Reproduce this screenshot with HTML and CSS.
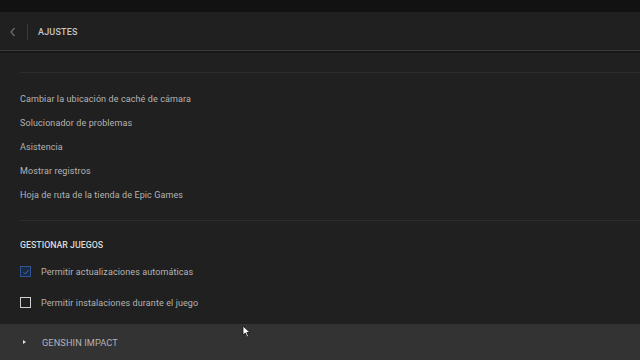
FILE: index.html
```html
<!DOCTYPE html>
<html lang="es">
<head>
    <meta charset="UTF-8">
    <meta name="viewport" content="width=device-width, initial-scale=1.0">
    <title>Ajustes</title>
    <link rel="stylesheet" href="styles.css">
</head>
<body>
    <div class="topbar"></div>

    <header class="header">
        <button class="back" aria-label="Volver">
            <svg width="8" height="10" viewBox="0 0 8 10"><path d="M5.5 1 L2 5 L5.5 9" fill="none" stroke="#6e6e6e" stroke-width="1.2"/></svg>
        </button>
        <span class="divider"></span>
        <h1 class="title">AJUSTES</h1>
    </header>

    <main class="content">
        <hr class="sep">

        <ul class="links">
            <li>Cambiar la ubicación de caché de cámara</li>
            <li>Solucionador de problemas</li>
            <li>Asistencia</li>
            <li>Mostrar registros</li>
            <li>Hoja de ruta de la tienda de Epic Games</li>
        </ul>

        <hr class="sep">

        <h2 class="section-title">GESTIONAR JUEGOS</h2>

        <label class="check-row">
            <span class="box checked">
                <svg width="8" height="8" viewBox="0 0 8 8"><path d="M1.5 4.2 L3.3 6 L6.6 2" fill="none" stroke="#3d6bb3" stroke-width="1"/></svg>
            </span>
            Permitir actualizaciones automáticas
        </label>
        <label class="check-row">
            <span class="box"></span>
            Permitir instalaciones durante el juego
        </label>
    </main>

    <div class="game-bar">
        <span class="caret"></span>
        <span class="game-name">GENSHIN IMPACT</span>
        <svg class="cursor" width="9" height="13" viewBox="0 0 9 13"><path d="M1 1 L1 10 L3.3 8 L5 12 L6.5 11.3 L4.8 7.5 L8 7.5 Z" fill="#fff" stroke="#111" stroke-width="0.8"/></svg>
    </div>
</body>
</html>
```

FILE: styles.css
```css
:root {
    --bg: #202020;
    --bar: #121212;
    --text: #b4b4b4;
    --text-strong: #d8d8d8;
    --line: #2d2d2d;
}

* {
    box-sizing: border-box;
    margin: 0;
    padding: 0;
}

body {
    background: var(--bg);
    color: var(--text);
    font-family: 'Roboto', 'Liberation Sans', sans-serif;
    width: 640px;
    height: 360px;
    overflow: hidden;
    display: flex;
    flex-direction: column;
}

.topbar {
    height: 12px;
    background: var(--bar);
}

.header {
    height: 39px;
    display: flex;
    align-items: center;
    padding: 2px 0 0 9px;
    border-bottom: 1px solid #3a3a3a;
    position: relative;
}

.header::after {
    content: '';
    position: absolute;
    left: 0;
    right: 0;
    bottom: -3px;
    height: 2px;
    background: #181818;
}

.back {
    background: none;
    border: none;
    width: 8px;
    height: 10px;
    display: flex;
}

.divider {
    width: 1px;
    height: 16px;
    background: #3a3a3a;
    margin-left: 10px;
}

.title {
    font-size: 9px;
    font-weight: 500;
    color: #c4c4c4;
    letter-spacing: 0.2px;
    margin-left: 10px;
}

.content {
    padding: 21px 0 0 20px;
    flex: 1;
}

.sep {
    border: none;
    height: 1px;
    background: var(--line);
}

.links {
    list-style: none;
    margin: 14px 0 13px;
}

.links li {
    height: 24px;
    line-height: 24px;
    font-size: 9px;
    letter-spacing: 0.1px;
}

.section-title {
    font-size: 8.8px;
    font-weight: 500;
    color: var(--text-strong);
    height: 22px;
    line-height: 22px;
    margin-top: 13px;
}

.check-row {
    display: flex;
    align-items: center;
    gap: 10px;
    height: 31px;
    font-size: 9px;
    letter-spacing: 0.1px;
}

.box {
    width: 11px;
    height: 11px;
    border: 1.5px solid #cfcfcf;
    display: flex;
    align-items: center;
    justify-content: center;
}

.box.checked {
    border-color: #2f5597;
    background: #1c2a40;
}

.game-bar {
    height: 36px;
    background: #333333;
    display: flex;
    align-items: center;
    padding-left: 23px;
    position: relative;
}

.caret {
    width: 0;
    height: 0;
    border-top: 2.5px solid transparent;
    border-bottom: 2.5px solid transparent;
    border-left: 3px solid #e0e0e0;
}

.game-name {
    font-size: 9.2px;
    color: var(--text);
    margin-left: 16px;
    letter-spacing: 0.1px;
}

.cursor {
    position: absolute;
    left: 242px;
    top: 1px;
}
```
